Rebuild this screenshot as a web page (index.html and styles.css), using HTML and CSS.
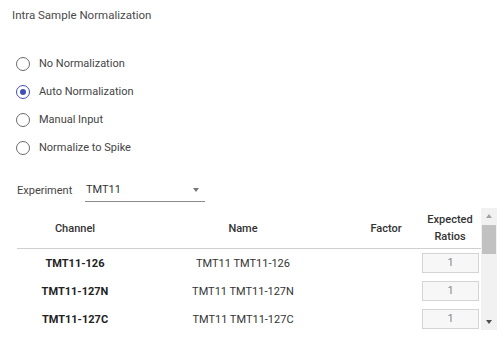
FILE: index.html
```html
<!DOCTYPE html>
<html lang="en">
<head>
  <meta charset="UTF-8" />
  <title>Intra Sample Normalization</title>
  <link rel="stylesheet" href="styles.css">
</head>
<body>
  <div class="panel">
    <div class="panel-title">Intra Sample Normalization</div>

    <div class="radio-group">
      <label class="radio"><span class="radio-circle"></span>No Normalization</label>
      <label class="radio checked"><span class="radio-circle"></span>Auto Normalization</label>
      <label class="radio"><span class="radio-circle"></span>Manual Input</label>
      <label class="radio"><span class="radio-circle"></span>Normalize to Spike</label>
    </div>

    <div class="experiment">
      <span class="experiment-label">Experiment</span>
      <div class="select">
        <span>TMT11</span>
        <span class="select-arrow"></span>
      </div>
    </div>

    <div class="table-wrap">
      <div class="table-scroll">
        <table class="channels">
          <thead>
            <tr>
              <th class="col-channel">Channel</th>
              <th class="col-name">Name</th>
              <th class="col-factor">Factor</th>
              <th class="col-ratio">Expected<br>Ratios</th>
            </tr>
          </thead>
          <tbody>
            <tr>
              <td class="channel">TMT11-126</td>
              <td>TMT11 TMT11-126</td>
              <td></td>
              <td><div class="ratio-box">1</div></td>
            </tr>
            <tr>
              <td class="channel">TMT11-127N</td>
              <td>TMT11 TMT11-127N</td>
              <td></td>
              <td><div class="ratio-box">1</div></td>
            </tr>
            <tr>
              <td class="channel">TMT11-127C</td>
              <td>TMT11 TMT11-127C</td>
              <td></td>
              <td><div class="ratio-box">1</div></td>
            </tr>
          </tbody>
        </table>
      </div>
      <!-- scrollbar drawn by hand, the renderer hides native ones -->
      <div class="scrollbar">
        <span class="scroll-arrow up"></span>
        <span class="scroll-thumb"></span>
        <span class="scroll-arrow down"></span>
      </div>
    </div>
  </div>
</body>
</html>
```

FILE: styles.css
```css
body {
  margin: 0;
  background: #fff;
  font-family: Roboto, 'Liberation Sans', sans-serif;
  color: #333;
  overflow: hidden;
}

.panel {
  padding: 8px 0 0 12px;
}

.panel-title {
  font-size: 11.5px;
  line-height: 15px;
  color: #4a4a4a;
}

.radio-group {
  display: flex;
  flex-direction: column;
  gap: 12px;
  margin-top: 33px;
  padding-left: 4px;
}

.radio {
  display: flex;
  align-items: center;
  gap: 9px;
  font-size: 11px;
  line-height: 16px;
  color: #444;
}

.radio-circle {
  width: 12px;
  height: 12px;
  border: 1.5px solid #6b6b6b;
  border-radius: 50%;
  position: relative;
}

.radio.checked .radio-circle {
  border-color: #3f51b5;
}

.radio.checked .radio-circle::after {
  content: '';
  position: absolute;
  left: 3px;
  top: 3px;
  width: 6px;
  height: 6px;
  border-radius: 50%;
  background: #3f51b5;
}

.experiment {
  display: flex;
  align-items: flex-end;
  margin-top: 27px;
  padding-left: 5px;
  font-size: 11px;
  color: #444;
}

.experiment-label {
  width: 68px;
  padding-bottom: 5px;
}

.select {
  display: flex;
  justify-content: space-between;
  align-items: center;
  padding: 0 6px 5px 1px;
  border-bottom: 1px solid #8a8a8a;
  color: #333;
  box-sizing: border-box;
  width: 120px;
}

.select-arrow {
  width: 0;
  height: 0;
  border-left: 3.5px solid transparent;
  border-right: 3.5px solid transparent;
  border-top: 4px solid #777;
}

.table-wrap {
  display: flex;
  margin: 6px 0 0 5px;
  width: 480px;
  height: 122px;
}

.table-scroll {
  width: 464px;
  overflow: hidden;
}

.scrollbar {
  width: 16px;
  background: #f1f1f1;
  display: flex;
  flex-direction: column;
  align-items: center;
}

.scroll-arrow {
  width: 0;
  height: 0;
  border-left: 3.5px solid transparent;
  border-right: 3.5px solid transparent;
}

.scroll-arrow.up {
  margin-top: 6px;
  border-bottom: 4px solid #a3a3a3;
}

.scroll-arrow.down {
  margin-top: auto;
  margin-bottom: 6px;
  border-top: 4px solid #505050;
}

.scroll-thumb {
  width: 14px;
  height: 29px;
  margin-top: 7px;
  background: #c1c1c1;
}

.channels {
  width: 464px;
  border-collapse: collapse;
  table-layout: fixed;
  font-size: 11px;
}

.channels th {
  font-weight: 500;
  color: #333;
  height: 40px;
  padding: 0;
  line-height: 17px;
  border-bottom: 1px solid #d0d0d0;
  text-align: center;
}

.col-channel { width: 116px; }
.col-name { width: 220px; }
.col-factor { width: 66px; }
.col-ratio { width: 62px; }

.channels td {
  height: 28px;
  padding: 0;
  text-align: center;
  color: #333;
}

.channels td.channel {
  font-weight: 700;
  color: #222;
}

.ratio-box {
  width: 55px;
  height: 18px;
  margin: 0 0 0 3px;
  border: 1px solid #d4d4d4;
  background: #f7f7f7;
  color: #888;
  line-height: 18px;
  font-size: 11px;
}
```
